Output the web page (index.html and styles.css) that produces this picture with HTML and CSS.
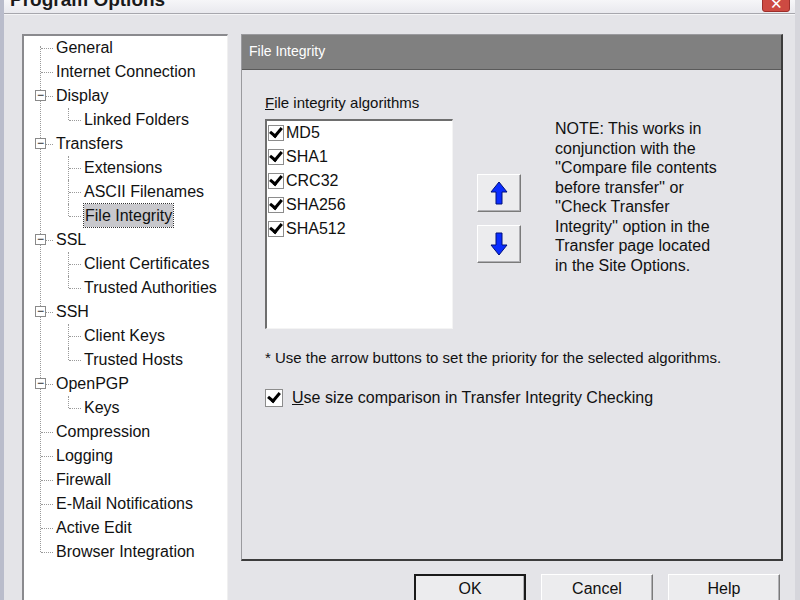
FILE: index.html
```html
<!DOCTYPE html>
<html lang="en">
<head>
    <meta charset="UTF-8">
    <title>Program Options</title>
    <link rel="stylesheet" href="styles.css">
</head>
<body>

    <div class="window">
        <div class="titlebar">
            <span class="title">Program Options</span>
            <span class="close">&#10005;</span>
        </div>

        <div class="frame">
            <!-- options tree -->
            <div class="tree">
                <div class="nodes">
                    <div class="node">General</div>
                    <div class="node">Internet Connection</div>
                    <div class="node open">Display</div>
                    <div class="node child last">Linked Folders</div>
                    <div class="node open">Transfers</div>
                    <div class="node child">Extensions</div>
                    <div class="node child">ASCII Filenames</div>
                    <div class="node child last"><span class="selected">File Integrity</span></div>
                    <div class="node open">SSL</div>
                    <div class="node child">Client Certificates</div>
                    <div class="node child last">Trusted Authorities</div>
                    <div class="node open">SSH</div>
                    <div class="node child">Client Keys</div>
                    <div class="node child last">Trusted Hosts</div>
                    <div class="node open">OpenPGP</div>
                    <div class="node child last">Keys</div>
                    <div class="node">Compression</div>
                    <div class="node">Logging</div>
                    <div class="node">Firewall</div>
                    <div class="node">E-Mail Notifications</div>
                    <div class="node">Active Edit</div>
                    <div class="node">Browser Integration</div>
                </div>
            </div>

            <div class="side">
                <div class="panel">
                    <div class="panel-head">File Integrity</div>
                    <div class="panel-body">
                        <div class="label"><u>F</u>ile integrity algorithms</div>

                        <div class="algo-row">
                            <div class="listbox">
                                <div class="item"><span class="check"></span>MD5</div>
                                <div class="item"><span class="check"></span>SHA1</div>
                                <div class="item"><span class="check"></span>CRC32</div>
                                <div class="item"><span class="check"></span>SHA256</div>
                                <div class="item"><span class="check"></span>SHA512</div>
                            </div>

                            <div class="arrows">
                                <button class="btn arrow">
                                    <svg width="18" height="24" viewBox="0 0 18 24">
                                        <path d="M9 1 L17 11 L12 11 L12 23 L6 23 L6 11 L1 11 Z" fill="#0a2cff" stroke="#00107a" stroke-width="1"/>
                                    </svg>
                                </button>
                                <button class="btn arrow">
                                    <svg width="18" height="24" viewBox="0 0 18 24">
                                        <path d="M9 23 L17 13 L12 13 L12 1 L6 1 L6 13 L1 13 Z" fill="#0a2cff" stroke="#00107a" stroke-width="1"/>
                                    </svg>
                                </button>
                            </div>

                            <p class="note">NOTE: This works in conjunction with the ''Compare file contents before transfer'' or ''Check Transfer Integrity'' option in the Transfer page located in the Site Options.</p>
                        </div>

                        <p class="hint">* Use the arrow buttons to set the priority for the selected algorithms.</p>

                        <label class="option"><span class="check"></span><span><u>U</u>se size comparison in Transfer Integrity Checking</span></label>
                    </div>
                </div>

                <div class="buttons">
                    <button class="btn default">OK</button>
                    <button class="btn">Cancel</button>
                    <button class="btn">Help</button>
                </div>
            </div>
        </div>
    </div>

</body>
</html>
```

FILE: styles.css
```css
/* Classic dialog look */
body {
    margin: 0;
    background-color: #e4e4e8;
    font-family: "Liberation Sans", Arial, sans-serif;
    font-size: 15px;
    color: #111;
}

.window {
    width: 800px;
    height: 600px;
    overflow: hidden;
    display: flex;
    flex-direction: column;
    box-sizing: border-box;
    border-left: 4px solid #b9bccb;
    border-right: 5px solid #d6d6dc;
}

.titlebar {
    height: 13px;
    flex-shrink: 0;
    display: flex;
    justify-content: space-between;
    align-items: flex-end;
    background: linear-gradient(#f6f6f8, #e9e9ee);
    border-bottom: 1px solid #a7a7ad;
    overflow: hidden;
}

.title {
    font-size: 19px;
    font-weight: bold;
    line-height: 19px;
    margin-bottom: 4px;
    margin-left: 6px;
    color: #1a1a1a;
}

.close {
    width: 28px;
    height: 22px;
    margin-right: 5px;
    margin-bottom: 1px;
    border-radius: 3px;
    background: #cd4a42;
    border: 1px solid #9d2e2a;
    color: #fff;
    font-size: 15px;
    line-height: 14px;
    text-align: center;
    overflow: hidden;
    box-sizing: border-box;
    display: flex;
    align-items: flex-end;
    justify-content: center;
}

.frame {
    flex: 1;
    min-height: 0;
    display: flex;
    padding: 19px 0 0 18px;
    border-top: 1px solid #f4f4f6;
}

/* tree */
.tree {
    width: 206px;
    height: 600px;
    flex-shrink: 0;
    box-sizing: border-box;
    background: #fff;
    border-top: 2px solid #8a8a8e;
    border-left: 2px solid #8a8a8e;
    border-right: 1px solid #f0f0f0;
    font-size: 16px;
}

.nodes {
    position: relative;
}

.nodes::before {
    content: "";
    position: absolute;
    left: 16px;
    top: 10px;
    height: 506px;
    border-left: 1px dotted #9a9a9a;
}

.node {
    position: relative;
    height: 24px;
    line-height: 24px;
    padding-left: 32px;
    white-space: nowrap;
}

.node::after {
    content: "";
    position: absolute;
    left: 17px;
    top: 12px;
    width: 12px;
    border-top: 1px dotted #9a9a9a;
}

.node.open::before {
    content: "\2212";
    position: absolute;
    left: 11px;
    top: 6px;
    width: 9px;
    height: 9px;
    line-height: 8px;
    font-size: 12px;
    text-align: center;
    background: #fff;
    border: 1px solid #8a8a8a;
    z-index: 1;
}

.node.child {
    padding-left: 60px;
}

.node.child::before {
    content: "";
    position: absolute;
    left: 44px;
    top: 0;
    height: 24px;
    border-left: 1px dotted #9a9a9a;
}

.node.child.last::before {
    height: 12px;
}

.node.child::after {
    left: 45px;
}

.selected {
    background: #c8c8cc;
    outline: 1px dotted #333;
    padding: 3px 1px;
}

/* right side */
.side {
    width: 542px;
    margin-left: 13px;
    display: flex;
    flex-direction: column;
}

.panel {
    height: 527px;
    flex-shrink: 0;
    box-sizing: border-box;
    border-top: 1px solid #9a9a9e;
    border-left: 1px solid #9a9a9e;
    border-right: 2px solid #3c3c3c;
    border-bottom: 2px solid #3c3c3c;
    display: flex;
    flex-direction: column;
}

.panel-head {
    height: 34px;
    line-height: 32px;
    background: #808080;
    color: #fff;
    font-size: 14px;
    padding-left: 7px;
    border-bottom: 1px solid #5a5a5a;
}

.panel-body {
    padding: 24px 0 0 23px;
}

.label {
    line-height: 18px;
}

.algo-row {
    display: flex;
    margin-top: 7px;
}

.listbox {
    width: 188px;
    height: 210px;
    box-sizing: border-box;
    background: #fff;
    border-top: 2px solid #6e6e6e;
    border-left: 2px solid #6e6e6e;
    border-right: 1px solid #f4f4f4;
    border-bottom: 1px solid #f4f4f4;
    font-size: 16px;
}

.item {
    height: 24px;
    display: flex;
    align-items: center;
    padding-left: 1px;
}

.check {
    width: 16px;
    height: 16px;
    flex-shrink: 0;
    box-sizing: border-box;
    border: 1px solid #8c8c8c;
    background: #fff;
    margin-right: 2px;
    display: inline-flex;
    align-items: center;
    justify-content: center;
}

.check::after {
    content: "";
    width: 5px;
    height: 9px;
    border-right: 3px solid #000;
    border-bottom: 3px solid #000;
    transform: rotate(40deg);
    margin-top: -4px;
}

.arrows {
    display: flex;
    flex-direction: column;
    gap: 13px;
    margin-left: 24px;
    margin-top: 55px;
}

.btn {
    font-family: "Liberation Sans", Arial, sans-serif;
    font-size: 16px;
    background: #ececee;
    color: #111;
    border: 1px solid;
    border-color: #ffffff #7a7a7a #7a7a7a #ffffff;
    box-shadow: inset -1px -1px 0 #b0b0b4;
    padding: 0;
}

.arrow {
    width: 44px;
    height: 38px;
    display: flex;
    align-items: center;
    justify-content: center;
}

.note {
    margin: 0 0 0 34px;
    width: 168px;
    font-size: 16px;
    line-height: 19.5px;
}

.hint {
    margin: 20px 0 0 0;
    line-height: 18px;
}

.option {
    display: flex;
    align-items: center;
    margin-top: 22px;
    font-size: 16px;
}

.option .check {
    width: 18px;
    height: 18px;
    margin-right: 9px;
}

.buttons {
    display: flex;
    justify-content: flex-end;
    gap: 15px;
    padding-right: 3px;
    margin-top: 13px;
}

.buttons .btn {
    width: 112px;
    height: 36px;
    flex-shrink: 0;
    padding-bottom: 6px;
}

.buttons .default {
    border: 2px solid #1a1a1a;
}
```
